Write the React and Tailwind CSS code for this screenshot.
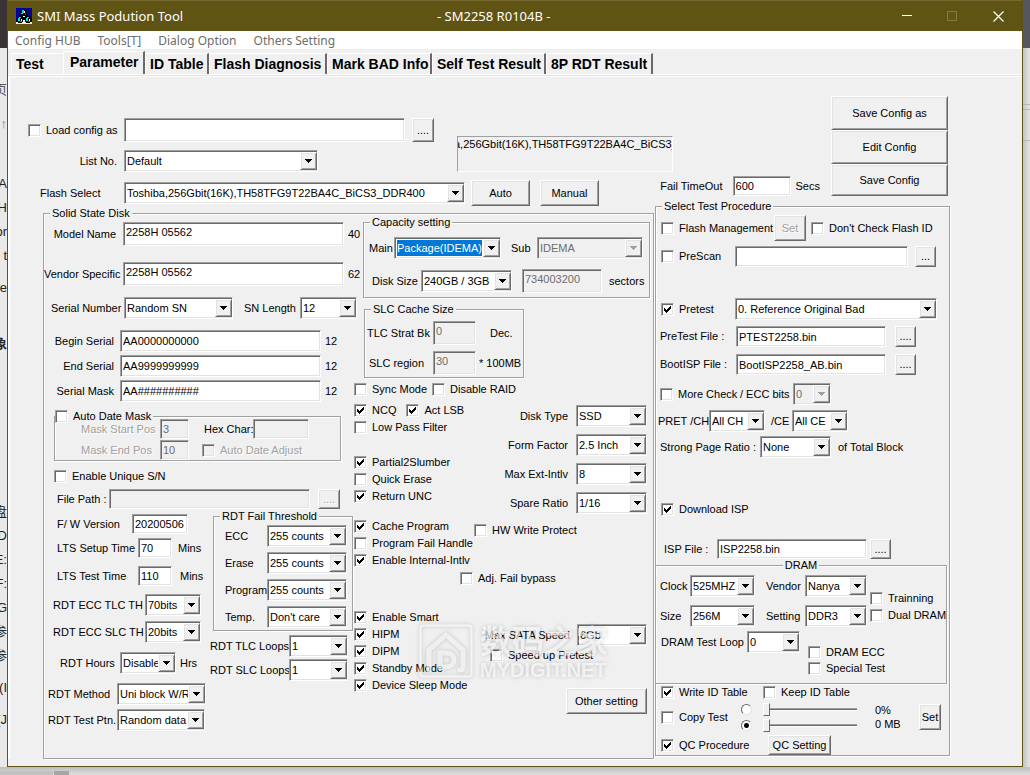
import React from "react";

const SUNKEN =
  "border border-t-[#a0a0a0] border-l-[#a0a0a0] border-r-white border-b-white shadow-[inset_1px_1px_0_#696969,inset_-1px_-1px_0_#e3e3e3]";
const RAISED =
  "border border-t-white border-l-white border-r-[#696969] border-b-[#696969] shadow-[inset_1px_1px_0_#e3e3e3,inset_-1px_-1px_0_#a0a0a0] bg-[#f0f0f0]";
const EMBOSSED = "text-[#a0a0a0] [text-shadow:1px_1px_0_#fff]";

function Label({ f, className = "", children }) {
  return (
    <label htmlFor={f} className={`shrink-0 whitespace-nowrap ${className}`}>
      {children}
    </label>
  );
}

function Field({ id, value = "", className = "", disabled = false, label }) {
  return (
    <input
      id={id}
      type="text"
      aria-label={label}
      defaultValue={value}
      disabled={disabled}
      className={`block min-w-0 shrink-0 px-[2px] outline-none ${SUNKEN} ${
        disabled ? "bg-[#f0f0f0] text-[#6d6d6d]" : "bg-white"
      } ${className}`}
    />
  );
}

function Combo({ id, value, label, className = "", disabled = false, highlighted = false }) {
  return (
    <span
      className={`grid h-[22px] shrink-0 py-px pl-px ${SUNKEN} ${disabled ? "bg-[#f0f0f0]" : "bg-white"} ${className}`}
    >
      <select
        id={id}
        aria-label={label}
        disabled={disabled}
        className={`col-start-1 row-start-1 min-w-0 appearance-none outline-none disabled:opacity-100 ${
          highlighted
            ? "my-px mr-[18px] ml-px bg-[#0078d7] text-white"
            : "mr-[17px] bg-transparent pl-px"
        } ${disabled ? "text-[#6d6d6d]" : ""}`}
      >
        <option>{value}</option>
      </select>
      <span
        className={`pointer-events-none col-start-1 row-start-1 flex w-[17px] items-center justify-center justify-self-end ${RAISED}`}
      >
        <svg width="7" height="4" viewBox="0 0 7 4" shapeRendering="crispEdges" aria-hidden="true">
          <path d="M0 0h7v1H0zM1 1h5v1H1zM2 2h3v1H2zM3 3h1v1H3z" fill={disabled ? "#a0a0a0" : "#000"} />
        </svg>
      </span>
    </span>
  );
}

function Check({ children, checked = false, disabled = false, className = "" }) {
  return (
    <label className={`flex shrink-0 items-center gap-[5px] whitespace-nowrap ${className}`}>
      <span className="grid size-[13px] shrink-0">
        <input
          type="checkbox"
          defaultChecked={checked}
          disabled={disabled}
          className={`peer col-start-1 row-start-1 size-[13px] appearance-none ${SUNKEN} ${
            disabled ? "bg-[#f0f0f0]" : "bg-white"
          }`}
        />
        <svg
          viewBox="0 0 13 13"
          className="pointer-events-none invisible col-start-1 row-start-1 size-[13px] peer-checked:visible"
          shapeRendering="crispEdges"
          aria-hidden="true"
        >
          <path d="M3 5h1v3H3zM4 6h1v3H4zM5 7h1v3H5zM6 6h1v3H6zM7 5h1v3H7zM8 4h1v3H8zM9 3h1v3H9z" fill="#000" />
        </svg>
      </span>
      <span className={disabled ? EMBOSSED : ""}>{children}</span>
    </label>
  );
}

function Button({ children, className = "", disabled = false, label }) {
  return (
    <button
      type="button"
      aria-label={label}
      disabled={disabled}
      className={`shrink-0 whitespace-nowrap ${RAISED} ${disabled ? EMBOSSED : ""} ${className}`}
    >
      {children}
    </button>
  );
}

function Group({ title, legendClass = "ml-1.5", className = "", children }) {
  return (
    <fieldset
      className={`min-w-0 border border-[#a0a0a0] shadow-[1px_1px_0_#fff,inset_1px_1px_0_#fff] ${className}`}
    >
      <legend className={`bg-[#f0f0f0] px-0.5 ${legendClass}`}>{title}</legend>
      {children}
    </fieldset>
  );
}

function Row({ className = "", children }) {
  return <div className={`flex items-center ${className}`}>{children}</div>;
}

function AppIcon() {
  return (
    <svg width="16" height="16" viewBox="0 0 16 16" shapeRendering="crispEdges" aria-hidden="true">
      <rect width="16" height="16" fill="#000098" />
      <path d="M0 13h16v3H0zM7 11h3v3H7z" fill="#e8e8e8" />
      <path d="M6 1h4v1h1v4h1v2h2v1h1v2h1v3h-2v1h-4v-1H9v-2H7v2H6v1H2v-1H0v-3h1V9h2V7h2V5H4V3h2z" fill="#000" />
      <path d="M6 2h2v3H7v1H5V5h1zM3 9h2v1H4v3H2v-3h1zM11 9h2v1h-1v3h-2v-3h1z" fill="#00e0e0" />
      <path d="M8 3h1v2H8zM5 11h1v2H5zM13 11h1v2h-1zM7 8h2v1H7z" fill="#e8ffff" />
      <path d="M9 5h1v2H9zM4 13h2v1H4zM12 13h2v1h-2z" fill="#008484" />
    </svg>
  );
}

function TitleBar() {
  return (
    <header className="flex h-[31px] items-center border-t border-[#756931] bg-[#5f5414] pl-2 font-['Noto_Sans',sans-serif] text-[13px] text-white">
      <AppIcon />
      <h1 className="ml-[5px] w-[400px]">SMI Mass Podution Tool</h1>
      <span className="flex-1">- SM2258 R0104B -</span>
      <button type="button" aria-label="Minimize" className="flex w-[46px] justify-center">
        <svg width="10" height="10" viewBox="0 0 10 10" aria-hidden="true">
          <path d="M0 4.500h10" stroke="#fff" />
        </svg>
      </button>
      <button type="button" aria-label="Maximize" disabled className="flex w-[44px] justify-center">
        <svg width="10" height="10" viewBox="0 0 10 10" aria-hidden="true">
          <path d="M.5.5h9v9h-9z" fill="none" stroke="#86793f" />
        </svg>
      </button>
      <button type="button" aria-label="Close" className="flex w-12 justify-center">
        <svg width="11" height="11" viewBox="0 0 11 11" aria-hidden="true">
          <path d="M.5.5l10 10M10.500.5l-10 10" stroke="#fff" strokeWidth="1.200" />
        </svg>
      </button>
    </header>
  );
}

const TABS = [
  ["Test", "w-[52px]"],
  ["Parameter", "w-[82px]"],
  ["ID Table", "w-[64px]"],
  ["Flash Diagnosis", "w-[118px]"],
  ["Mark BAD Info", "w-[105px]"],
  ["Self Test Result", "w-[114px]"],
  ["8P RDT Result", "w-[107px]"],
];

function Tabs() {
  return (
    <div
      role="tablist"
      className="flex h-[26px] items-end border-b border-white pl-[3px] text-[14px] font-bold"
    >
      {TABS.map(([name, width]) => {
        const active = name === "Parameter";
        return (
          <button
            key={name}
            type="button"
            role="tab"
            aria-selected={active}
            className={`shrink-0 border-t border-l border-white pl-1 text-left whitespace-nowrap ${width} ${
              active ? "h-[23px] pb-0.5 pl-1.5" : "h-[21px]"
            } ${name === "Test" ? "" : "border-r-2 border-r-[#696969]"}`}
          >
            {name}
          </button>
        );
      })}
    </div>
  );
}

function ConfigArea() {
  return (
    <section className="flex pr-[74px] pl-5">
      <div className="flex min-w-0 flex-1 flex-col pt-[41px]">
        <div className="flex">
          <div className="w-[429px] shrink-0">
            <Row>
              <Check className="w-24">Load config as</Check>
              <Field label="Config file" className="h-6 w-[281px]" />
              <Button label="Browse config" className="ml-[7px] h-6 w-[22px]">....</Button>
            </Row>
            <Row className="mt-2">
              <Label f="listno" className="w-24 pr-[7px] text-right">List No.</Label>
              <Combo id="listno" value="Default" className="w-[194px]" />
            </Row>
          </div>
          <output className="block h-9 w-[216px] shrink-0 self-end overflow-hidden border border-t-[#a0a0a0] border-r-white border-b-white border-l-[#a0a0a0] pt-px -indent-1 whitespace-nowrap">
            a,256Gbit(16K),TH58TFG9T22BA4C_BiCS3_DDR400
          </output>
        </div>
        <Row className="mt-2">
          <Label f="flash" className="w-24 pl-3">Flash Select</Label>
          <Combo id="flash" value="Toshiba,256Gbit(16K),TH58TFG9T22BA4C_BiCS3_DDR400" className="w-[341px]" />
          <Button className="ml-1.5 h-[26px] w-[59px]">Auto</Button>
          <Button className="ml-2.5 h-[26px] w-[59px]">Manual</Button>
          <div className="-mt-1 ml-auto flex items-center self-start pr-[11px]">
            <Label f="timeout" className="mr-2.5">Fail TimeOut</Label>
            <Field id="timeout" value="600" className="h-5 w-[58px]" />
            <span className="ml-[5px]">Secs</span>
          </div>
        </Row>
      </div>
      <div className="flex w-[117px] shrink-0 flex-col pt-[19px]">
        <Button className="h-[34px]">Save Config as</Button>
        <Button className="h-[34px]">Edit Config</Button>
        <Button className="h-8">Save Config</Button>
      </div>
    </section>
  );
}

function IdentityFields() {
  return (
    <>
      <Row className="mt-0.5">
        <Label f="model" className="w-[79px] pr-[7px] text-right">Model Name</Label>
        <Field id="model" value="2258H 05562" className="h-6 w-[221px] pb-1" />
        <span className="ml-1">40</span>
      </Row>
      <Row className="mt-4">
        <Label f="vendor" className="w-[79px] pr-[3px] text-right">Vendor Specific</Label>
        <Field id="vendor" value="2258H 05562" className="h-6 w-[221px] pb-1" />
        <span className="ml-1">62</span>
      </Row>
      <Row className="mt-[11px]">
        <Label f="sn" className="w-20 pl-[7px]">Serial Number</Label>
        <Combo id="sn" value="Random SN" className="w-[109px]" />
        <Label f="snlen" className="w-[67px] pl-[11px]">SN Length</Label>
        <Combo id="snlen" value="12" className="w-[57px]" />
      </Row>
      <div className="mt-[11px] flex flex-col gap-[3px]">
        {[
          ["begin", "Begin Serial", "AA0000000000"],
          ["end", "End Serial", "AA9999999999"],
          ["mask", "Serial Mask", "AA##########"],
        ].map(([id, text, value]) => (
          <Row key={id}>
            <Label f={id} className="w-[76px] pr-1.5 text-right">{text}</Label>
            <Field id={id} value={value} className="h-[22px] w-[201px]" />
            <span className="ml-1">12</span>
          </Row>
        ))}
      </div>
      <Group
        className="mt-2 ml-2.5 w-[287px]"
        legendClass=""
        title={<Check className="-ml-0.5">Auto Date Mask</Check>}
      >
        <Row className="-mt-1">
          <Label f="mstart" className={`w-[105px] pl-[26px] ${EMBOSSED}`}>Mask Start Pos</Label>
          <Field id="mstart" value="3" disabled className="h-5 w-[29px]" />
          <Label f="hex" className="ml-[15px] w-[49px]">Hex Char:</Label>
          <Field id="hex" disabled className="h-5 w-[56px]" />
        </Row>
        <Row className="mt-px">
          <Label f="mend" className={`w-[105px] pl-[26px] ${EMBOSSED}`}>Mask End Pos</Label>
          <Field id="mend" value="10" disabled className="h-5 w-[29px]" />
          <Check disabled className="ml-[13px]">Auto Date Adjust</Check>
        </Row>
      </Group>
      <Check className="mt-[9px] ml-2.5">Enable Unique S/N</Check>
      <Row className="mt-1.5 pl-[13px]">
        <Label f="path" className="w-[52px]">File Path :</Label>
        <Field id="path" disabled className="h-5 w-[201px]" />
        <Button disabled label="Browse path" className="ml-2 h-5 w-[22px]">....</Button>
      </Row>
    </>
  );
}

function RdtFields() {
  return (
    <div className="mt-px flex items-start">
      <div className="w-[169px] shrink-0 pt-1">
        <Row className="pl-[13px]">
          <Label f="fw" className="w-[75px]">F/ W Version</Label>
          <Field id="fw" value="20200506" className="h-5 w-14" />
        </Row>
        <Row className="mt-1 pl-[13px]">
          <Label f="lsetup" className="w-[81px]">LTS Setup Time</Label>
          <Field id="lsetup" value="70" className="h-5 w-[34px]" />
          <span className="ml-1.5">Mins</span>
        </Row>
        <Row className="mt-2 pl-[13px]">
          <Label f="ltest" className="w-[81px]">LTS Test Time</Label>
          <Field id="ltest" value="110" className="h-5 w-[34px]" />
          <span className="ml-2">Mins</span>
        </Row>
        <Row className="mt-2 pl-[9px]">
          <Label f="tlcth" className="w-[92px]">RDT ECC TLC TH</Label>
          <Combo id="tlcth" value="70bits" className="w-[56px]" />
        </Row>
        <Row className="mt-[5px] pl-[9px]">
          <Label f="slcth" className="w-[92px]">RDT ECC SLC TH</Label>
          <Combo id="slcth" value="20bits" className="w-[56px]" />
        </Row>
        <Row className="mt-[9px] pl-4">
          <Label f="hours" className="w-[60px]">RDT Hours</Label>
          <Combo id="hours" value="Disable" className="w-[56px]" />
          <span className="ml-1">Hrs</span>
        </Row>
        <Row className="mt-[9px] pl-1">
          <Label f="method" className="w-[69px]">RDT Method</Label>
          <Combo id="method" value="Uni block W/R" className="w-[89px]" />
        </Row>
        <Row className="mt-1 pl-1">
          <Label f="ptn" className="w-[69px]">RDT Test Ptn.</Label>
          <Combo id="ptn" value="Random data" className="w-[88px]" />
        </Row>
      </div>
      <div className="w-[140px] shrink-0">
        <Group title="RDT Fail Threshold">
          <div className="flex flex-col gap-[5px] pt-0.5 pb-0.5">
            {[
              ["tecc", "ECC", "255 counts"],
              ["terase", "Erase", "255 counts"],
              ["tprog", "Program", "255 counts"],
              ["ttemp", "Temp.", "Don't care"],
            ].map(([id, text, value]) => (
              <Row key={id}>
                <Label f={id} className="w-[53px] pl-[11px]">{text}</Label>
                <Combo id={id} value={value} className="w-20" />
              </Row>
            ))}
          </div>
        </Group>
        <div className="mt-1 -ml-[3px] flex flex-col gap-0.5">
          <Row>
            <Label f="tlcloop" className="w-[79px]">RDT TLC Loops</Label>
            <Combo id="tlcloop" value="1" className="w-[59px]" />
          </Row>
          <Row>
            <Label f="slcloop" className="w-[79px]">RDT SLC Loops</Label>
            <Combo id="slcloop" value="1" className="w-[59px]" />
          </Row>
        </div>
      </div>
    </div>
  );
}

function CapacityGroup() {
  return (
    <Group title="Capacity setting" className="mr-[3px] ml-px pb-1">
      <Row className="mt-2 pl-[5px]">
        <Label f="main" className="w-[25px]">Main</Label>
        <Combo id="main" value="Package(IDEMA)" highlighted className="w-[107px]" />
        <Label f="sub" className="ml-2.5 w-[26px]">Sub</Label>
        <Combo id="sub" value="IDEMA" disabled className="w-[106px]" />
      </Row>
      <Row className="mt-2.5 pl-2">
        <Label f="dsize" className="w-[49px]">Disk Size</Label>
        <Combo id="dsize" value="240GB / 3GB" className="w-[91px]" />
        <Field label="Sector count" value="734003200" disabled className="ml-2.5 h-6 w-20 pb-1" />
        <span className="ml-[7px]">sectors</span>
      </Row>
    </Group>
  );
}

function CacheGroup() {
  return (
    <Group title="SLC Cache Size" className="mt-[5px] ml-0.5 w-[160px] pb-0.5">
      <Row className="mt-[5px] pl-0.5">
        <Label f="tlcbk" className="w-[66px]">TLC Strat Bk</Label>
        <Field id="tlcbk" value="0" disabled className="h-6 w-[43px] pb-1" />
        <span className="ml-3.5">Dec.</span>
      </Row>
      <Row className="mt-1.5 pl-1">
        <Label f="slcrg" className="w-16">SLC region</Label>
        <Field id="slcrg" value="30" disabled className="h-6 w-[43px] pb-1" />
        <span className="ml-[3px] whitespace-nowrap">* 100MB</span>
      </Row>
    </Group>
  );
}

function FeatureChecks() {
  return (
    <div className="w-[106px] shrink-0 pt-2">
      <div className="flex flex-col gap-1">
        <Row className="gap-2.5">
          <Check checked>NCQ</Check>
          <Check checked>Act LSB</Check>
        </Row>
        <Check>Low Pass Filter</Check>
      </div>
      <div className="mt-[22px] flex flex-col gap-1">
        <Check checked>Partial2Slumber</Check>
        <Check>Quick Erase</Check>
        <Check checked>Return UNC</Check>
      </div>
      <div className="mt-[17px] flex flex-col gap-1">
        <Check checked>Cache Program</Check>
        <Check>Program Fail Handle</Check>
        <Check checked>Enable Internal-Intlv</Check>
      </div>
      <div className="mt-11 flex flex-col gap-1">
        <Check checked>Enable Smart</Check>
        <Check checked>HIPM</Check>
        <Check checked>DIPM</Check>
        <Check checked>Standby Mode</Check>
        <Check checked>Device Sleep Mode</Check>
      </div>
    </div>
  );
}

function DiskOptions() {
  return (
    <div className="flex min-w-0 flex-1 flex-col pt-[9px] pr-1.5">
      <div className="flex flex-col gap-[7px]">
        {[
          ["dtype", "Disk Type", "SSD"],
          ["form", "Form Factor", "2.5 Inch"],
          ["ext", "Max Ext-Intlv", "8"],
          ["spare", "Spare Ratio", "1/16"],
        ].map(([id, text, value]) => (
          <Row key={id} className="justify-end gap-2">
            <Label f={id}>{text}</Label>
            <Combo id={id} value={value} className="w-[71px]" />
          </Row>
        ))}
      </div>
      <Check className="mt-2.5 ml-3.5">HW Write Protect</Check>
      <Check className="mt-[35px]">Adj. Fail bypass</Check>
      <Row className="mt-[39px] justify-end gap-[7px]">
        <Label f="sata">Max SATA Speed</Label>
        <Combo id="sata" value="6Gb" className="w-[70px]" />
      </Row>
      <Check className="mt-[3px] ml-[30px]">Speed up Pretest</Check>
      <Button className="mt-[26px] h-[26px] w-[81px] self-end">Other setting</Button>
    </div>
  );
}

function Watermark() {
  return (
    <div className="pointer-events-none absolute right-[45px] bottom-[50px] flex items-center gap-[7px] text-white/65 drop-shadow-[0_0_2px_rgba(0,0,0,0.3)]">
      <svg width="54" height="54" viewBox="0 0 54 54" fill="none" stroke="currentColor" aria-hidden="true">
        <rect x="1.500" y="1.500" width="51" height="51" rx="3" strokeWidth="2" />
        <path d="M10 46V26L27 11l17 15v17c0 2-1 3-3 3" strokeWidth="5" strokeLinejoin="round" strokeLinecap="round" />
        <path d="M21 29h6c5 0 8 3 8 7s-3 7-8 7h-6z" strokeWidth="5" />
      </svg>
      <div className="font-bold whitespace-nowrap">
        <div className="font-['Noto_Sans_CJK_SC',sans-serif] text-[32px] leading-[38px]">数码之家</div>
        <div className="text-[20px] leading-6">MYDIGIT.NET</div>
      </div>
    </div>
  );
}

function SolidStateDisk() {
  return (
    <Group title="Solid State Disk" className="mt-px flex-1 pb-[26px]">
      <div className="flex items-start">
        <div className="w-[318px] shrink-0">
          <IdentityFields />
          <RdtFields />
        </div>
        <div className="relative -mt-1 min-w-0 flex-1 pb-[18px]">
          <CapacityGroup />
          <CacheGroup />
          <div className="-ml-2">
            <Row className="mt-[5px] gap-[5px]">
              <Check>Sync Mode</Check>
              <Check>Disable RAID</Check>
            </Row>
            <div className="flex items-start">
              <FeatureChecks />
              <DiskOptions />
            </div>
          </div>
          <Watermark />
        </div>
      </div>
    </Group>
  );
}

function DramGroup() {
  return (
    <Group title="DRAM" legendClass="mx-auto" className="mr-0.5 -ml-px pb-2">
      <div className="flex pt-[3px] pl-1">
        <div className="grid shrink-0 grid-cols-[30px_65px_50px_62px] items-center gap-y-2">
          <Label f="clock">Clock</Label>
          <Combo id="clock" value="525MHZ" />
          <Label f="dvendor" className="pl-[11px]">Vendor</Label>
          <Combo id="dvendor" value="Nanya" />
          <Label f="size">Size</Label>
          <Combo id="size" value="256M" />
          <Label f="setting" className="pl-[11px]">Setting</Label>
          <Combo id="setting" value="DDR3" />
        </div>
        <div className="ml-[3px] flex flex-col gap-1 self-end pb-[5px]">
          <Check>Trainning</Check>
          <Check>Dual DRAM</Check>
        </div>
      </div>
      <div className="mt-1 flex items-start pl-[5px]">
        <Row>
          <Label f="loop" className="w-[86px]">DRAM Test Loop</Label>
          <Combo id="loop" value="0" className="w-[53px]" />
        </Row>
        <div className="mt-[15px] ml-2 flex flex-col gap-[3px]">
          <Check>DRAM ECC</Check>
          <Check>Special Test</Check>
        </div>
      </div>
    </Group>
  );
}

function CopySlider({ name, selected }) {
  return (
    <Row className="gap-[11px]">
      <input
        type="radio"
        name="copy"
        aria-label={`Copy by ${name}`}
        defaultChecked={selected}
        className="size-[11px] appearance-none rounded-full border border-t-[#696969] border-r-[#e3e3e3] border-b-[#e3e3e3] border-l-[#696969] bg-white checked:bg-[radial-gradient(circle,#000_2px,#fff_3px)]"
      />
      <input
        type="range"
        aria-label={`Copy ${name}`}
        defaultValue="0"
        className="h-3.5 w-[94px] appearance-none bg-transparent [&::-webkit-slider-runnable-track]:h-[3px] [&::-webkit-slider-runnable-track]:border-t [&::-webkit-slider-runnable-track]:border-b [&::-webkit-slider-runnable-track]:border-t-[#a0a0a0] [&::-webkit-slider-runnable-track]:border-b-white [&::-webkit-slider-runnable-track]:bg-[#696969] [&::-webkit-slider-thumb]:-mt-[6px] [&::-webkit-slider-thumb]:h-[13px] [&::-webkit-slider-thumb]:w-[7px] [&::-webkit-slider-thumb]:appearance-none [&::-webkit-slider-thumb]:border [&::-webkit-slider-thumb]:border-t-white [&::-webkit-slider-thumb]:border-r-[#696969] [&::-webkit-slider-thumb]:border-b-[#696969] [&::-webkit-slider-thumb]:border-l-white [&::-webkit-slider-thumb]:bg-[#f0f0f0]"
      />
    </Row>
  );
}

function TestProcedure() {
  return (
    <Group title="Select Test Procedure" className="-mt-1.5 w-[295px] shrink-0">
      <Row className="mt-0.5 pl-[5px]">
        <Check className="w-[113px]">Flash Management</Check>
        <Button disabled className="h-[26px] w-8">Set</Button>
        <Check className="ml-[5px]">Don't Check Flash ID</Check>
      </Row>
      <Row className="mt-[5px] pl-[5px]">
        <Check className="w-[74px]">PreScan</Check>
        <Field label="PreScan file" className="h-[21px] w-[173px]" />
        <Button label="Browse PreScan" className="ml-[7px] h-[21px] w-[21px]">...</Button>
      </Row>
      <Row className="mt-[31px] pl-[5px]">
        <Check checked className="w-[74px]">Pretest</Check>
        <Combo label="Pretest mode" value="0. Reference Original Bad" className="w-[202px]" />
      </Row>
      <Row className="mt-1.5 pl-1">
        <Label f="pfile" className="w-[76px]">PreTest File :</Label>
        <Field id="pfile" value="PTEST2258.bin" className="h-[21px] w-[150px]" />
        <Button label="Browse PreTest file" className="ml-[9px] h-[21px] w-[21px]">....</Button>
      </Row>
      <Row className="mt-[7px] pl-1">
        <Label f="bfile" className="w-[76px]">BootISP File :</Label>
        <Field id="bfile" value="BootISP2258_AB.bin" className="h-[21px] w-[150px]" />
        <Button label="Browse BootISP file" className="ml-[9px] h-[21px] w-[21px]">....</Button>
      </Row>
      <Row className="mt-2 pl-1">
        <Check className="w-20">More Check</Check>
        <Label f="eccbits" className="w-[53px]">/ ECC bits</Label>
        <Combo id="eccbits" value="0" disabled className="w-[38px]" />
      </Row>
      <Row className="mt-[5px] pl-0.5">
        <Label f="ch" className="w-[51px]">PRET /CH</Label>
        <Combo id="ch" value="All CH" className="w-[56px]" />
        <Label f="ce" className="ml-1.5 w-[21px]">/CE</Label>
        <Combo id="ce" value="All CE" className="w-[56px]" />
      </Row>
      <Row className="mt-1 pl-1">
        <Label f="ratio" className="w-[100px]">Strong Page Ratio :</Label>
        <Combo id="ratio" value="None" className="w-[71px]" />
        <span className="ml-[7px]">of Total Block</span>
      </Row>
      <Check checked className="mt-[45px] ml-[5px]">Download ISP</Check>
      <Row className="mt-[23px] pl-2">
        <Label f="isp" className="w-[53px]">ISP File :</Label>
        <Field id="isp" value="ISP2258.bin" className="h-5 w-[150px]" />
        <Button label="Browse ISP file" className="ml-[3px] h-5 w-[21px]">....</Button>
      </Row>
      <DramGroup />
      <Row className="mt-0.5 pl-[5px]">
        <Check checked className="w-[102px]">Write ID Table</Check>
        <Check>Keep ID Table</Check>
      </Row>
      <Row className="mt-[3px] pl-[5px]">
        <Check className="w-20">Copy Test</Check>
        <div className="flex flex-col gap-0.5">
          <CopySlider name="percent" />
          <CopySlider name="size" selected />
        </div>
        <div className="ml-[18px] flex w-11 flex-col gap-px">
          <span>0%</span>
          <span>0 MB</span>
        </div>
        <Button className="h-[26px] w-[22px]">Set</Button>
      </Row>
      <Row className="mt-[3px] pl-[5px]">
        <Check checked className="w-[107px]">QC Procedure</Check>
        <Button className="h-5 w-[63px]">QC Setting</Button>
      </Row>
    </Group>
  );
}

function DocumentEdge() {
  return (
    <div
      aria-hidden="true"
      className="flex w-[7px] shrink-0 flex-col items-end overflow-hidden bg-[#e9e9e9] font-['Liberation_Sans','Noto_Sans_CJK_SC',sans-serif] text-[13px] leading-6 whitespace-nowrap text-[#222]"
    >
      <div className="h-12 w-full shrink-0 bg-[#3a3336]" />
      <div className="mt-[30px] h-6 text-[#555]">页</div>
      <div className="mt-2.5 h-6 text-[#777]">↑</div>
      <div className="mt-9 h-6">AA</div>
      <div className="h-6">H</div>
      <div className="h-6">or</div>
      <div className="h-6">t</div>
      <div className="mt-2 h-6">ve</div>
      <div className="mt-8 h-6 font-bold">象</div>
      <div className="mt-[144px] h-6">盘</div>
      <div className="h-6">D</div>
      <div className="h-6">E:</div>
      <div className="h-6">F:</div>
      <div className="h-6">G</div>
      <div className="h-6">参</div>
      <div className="h-6">参</div>
      <div className="mt-2 h-6">(I</div>
      <div className="mt-2 h-6">(J</div>
    </div>
  );
}

export default function App() {
  return (
    <div className="flex min-h-screen flex-col bg-[#d2d2d2] font-['Liberation_Sans',Arial,sans-serif] text-[11px] leading-[13px] text-black">
      <div className="flex">
        <DocumentEdge />
        <main className="min-w-0 flex-1 border-x border-b border-[#5f5414] bg-[#f0f0f0] pb-[7px]">
          <TitleBar />
          <nav className="flex h-[18px] items-center gap-[17px] bg-white pl-[7px] font-['Noto_Sans',sans-serif] text-[12px] text-[#6d6d6d]">
            <a href="#hub">Config HUB</a>
            <a href="#tools">Tools[T]</a>
            <a href="#dialog">Dialog Option</a>
            <a href="#others">Others Setting</a>
          </nav>
          <Tabs />
          <div className="border-t border-[#e3e3e3]">
            <div className="border-t border-l-2 border-white">
              <div className="-ml-0.5">
                <ConfigArea />
                <div className="flex items-start gap-px pr-[72px] pl-[35px]">
                  <SolidStateDisk />
                  <TestProcedure />
                </div>
              </div>
            </div>
          </div>
        </main>
        <div aria-hidden="true" className="flex w-[7px] shrink-0 flex-col bg-linear-to-r from-[#c4c4c4] to-[#e6e6e6]">
          <div className="h-12 bg-[#55565e]" />
          <div className="mt-14 h-1.5 border-y border-[#b5b5b5]" />
          <div className="mt-[30px] border-t border-[#b5b5b5]" />
        </div>
      </div>
      <div aria-hidden="true" className="flex flex-1 items-end bg-linear-to-b from-[#bdbdbd] to-[#dedede]">
        <div className="h-1 w-[53px] bg-[#c2c2c2]" />
        <div className="ml-px h-1 w-[15px] bg-[#a6a6a6]" />
      </div>
    </div>
  );
}
